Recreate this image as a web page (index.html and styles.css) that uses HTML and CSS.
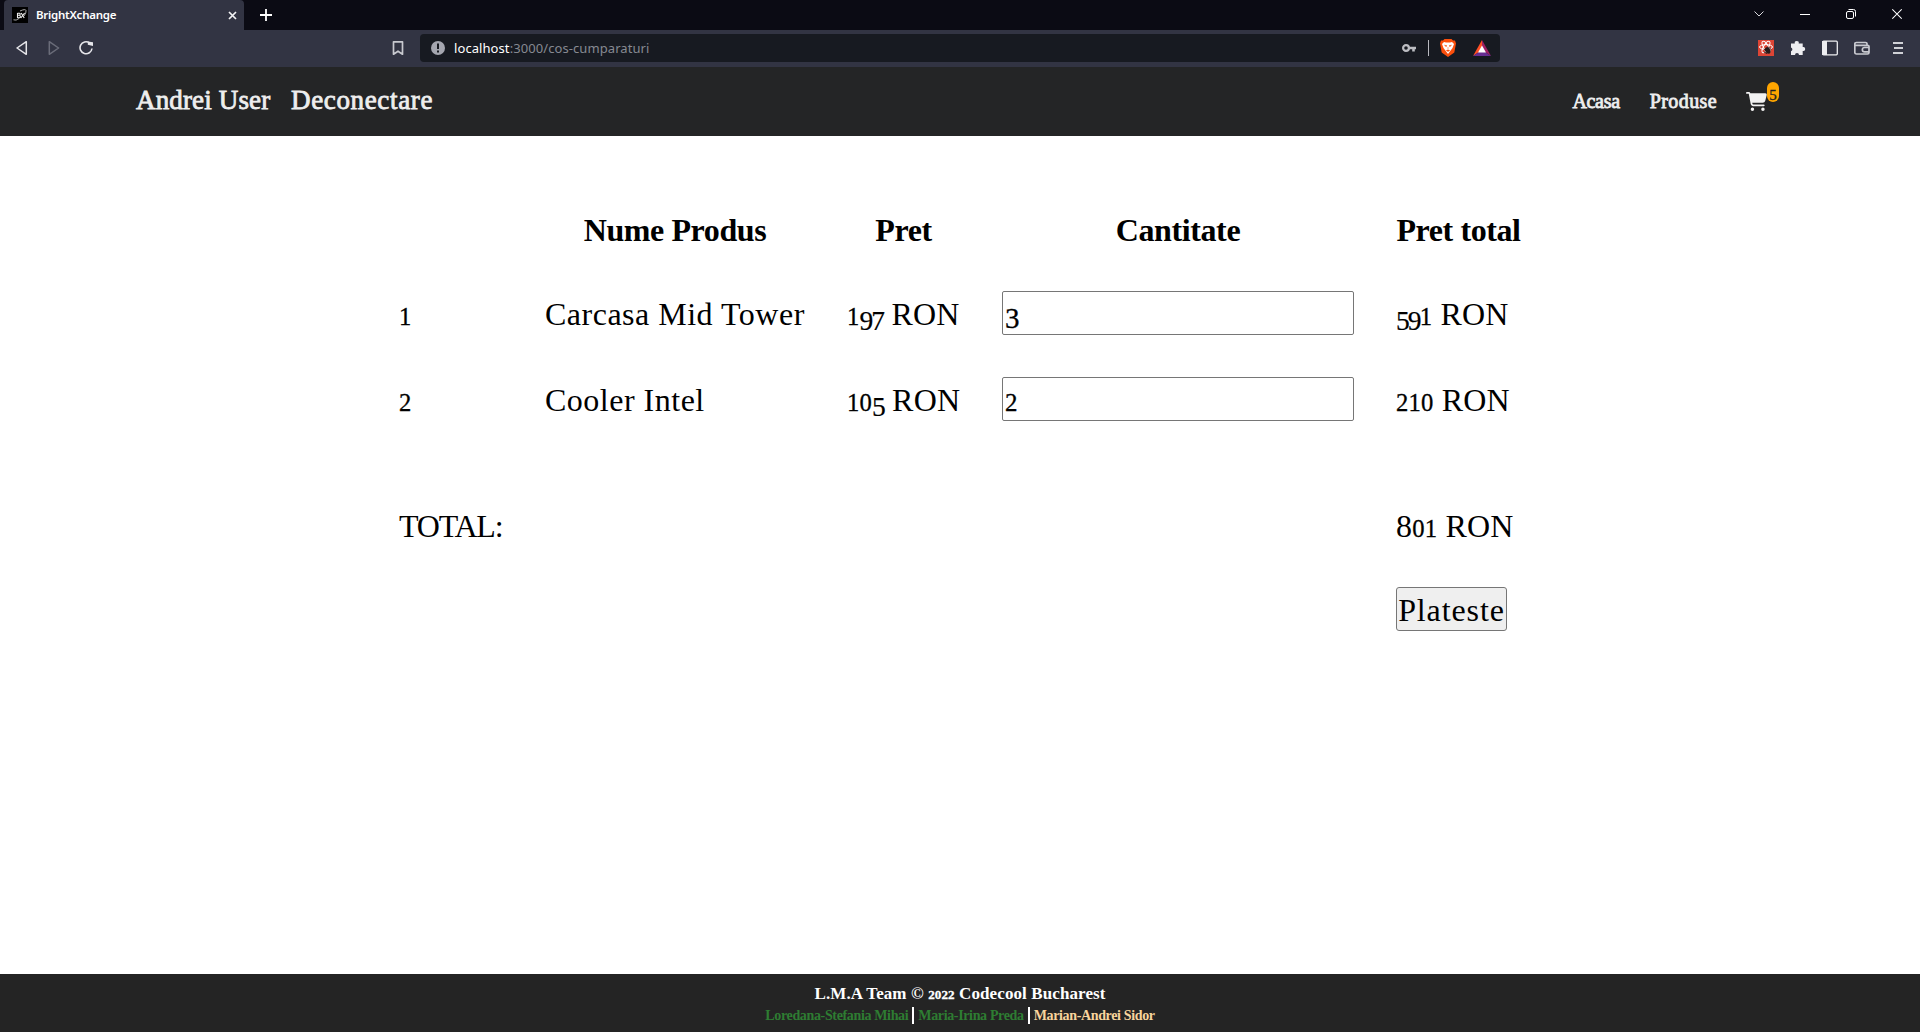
FILE: index.html
```html
<!DOCTYPE html>
<html lang="ro">
<head>
<meta charset="utf-8">
<title>BrightXchange</title>
<link rel="stylesheet" href="styles.css">
</head>
<body>
<div class="tabstrip">
  <div class="tab">
    <svg class="favicon" width="16" height="16" viewBox="0 0 16 16"><rect width="16" height="16" fill="#000"/><path d="M5.500 6v5M5.500 6.200h2q1.200.4.300 2H5.800M7.500 8.300q1.600.9.300 2.400H5.500M9.200 6l3 5M12.600 6l-3.800 5" fill="none" stroke="#eee" stroke-width="1.100"/><path d="M8 4Q13.500 1.500 14 3.500T12 9M1.500 12.800Q4 14 7 11.500" fill="none" stroke="#bbb" stroke-width=".9"/></svg>
    <span class="tab-title">BrightXchange</span>
    <svg class="tab-close" width="9" height="9" viewBox="0 0 9 9"><path d="M1 1l7 7M8 1L1 8" stroke="#f2f2f4" stroke-width="1.700"/></svg>
  </div>
  <svg class="newtab" width="12" height="12" viewBox="0 0 12 12"><path d="M6 0v12M0 6h12" stroke="#fff" stroke-width="1.800"/></svg>
  <div class="window-buttons">
    <svg width="10" height="12" viewBox="0 0 10 12"><path d="M.5 3.500L5 8l4.500-4.500" fill="none" stroke="#d8d8dc"/></svg>
    <svg width="10" height="12" viewBox="0 0 10 12"><path d="M0 6.500h10" stroke="#fff"/></svg>
    <svg width="10" height="12" viewBox="0 0 10 12"><rect x=".5" y="3.500" width="7" height="7" rx="1.500" fill="none" stroke="#fff"/><path d="M2.500 1.500h5q2 0 2 2v5" fill="none" stroke="#fff"/></svg>
    <svg width="10" height="12" viewBox="0 0 10 12"><path d="M.3 1.300l9.400 9.400M9.700 1.300L.3 10.700" stroke="#fff" stroke-width="1.100"/></svg>
  </div>
</div>
<div class="toolbar">
  <svg class="back" width="12" height="16" viewBox="0 0 12 16"><path d="M10.300 1.700v12.600L1 8z" fill="none" stroke="#e6e6ea" stroke-width="1.500" stroke-linejoin="round"/></svg>
  <svg class="forward" width="12" height="16" viewBox="0 0 12 16"><path d="M1.300 1.700v12.600L10.600 8z" fill="none" stroke="#6a6c79" stroke-width="1.500" stroke-linejoin="round"/></svg>
  <svg class="reload" width="15" height="16" viewBox="0 0 15 16"><path d="M10.500 2.800A6 6 0 1 0 13 8.500" fill="none" stroke="#e6e6ea" stroke-width="1.600"/><path d="M8.800 4.700V1.500L14 2.200V6z" fill="#e6e6ea"/></svg>
  <svg class="bookmark" width="12" height="16" viewBox="0 0 12 16"><path d="M1.500 1.800h9v12.400L6 11.200l-4.500 3z" fill="none" stroke="#c8c9cf" stroke-width="1.700" stroke-linejoin="round"/></svg>
  <div class="address">
    <svg width="14" height="14" viewBox="0 0 14 14"><circle cx="7" cy="7" r="7" fill="#a4a6af"/><path d="M7 2.500v5.500M7 9.500v2" stroke="#171a21" stroke-width="2"/></svg>
    <span class="url"><b>localhost</b>:3000/cos-cumparaturi</span>
    <svg class="key" width="14" height="10" viewBox="0 0 14 10"><circle cx="4" cy="5" r="2.900" fill="none" stroke="#bcbdc2" stroke-width="2.200"/><path d="M7 5h7M11.500 5v3.500" stroke="#bcbdc2" stroke-width="2.600"/></svg>
    <span class="divider"></span>
    <svg class="brave" width="16" height="18" viewBox="0 0 16 18"><path d="M4.500 0h7l1.500 1.500L15 1.500l1 3-1.700 9L8 18l-6.300-4.500L0 4.500l1-3 2 0z" fill="#fb4f0c"/><path d="M2 5l2-2 2 .5h4l2-.5 2 2-1.500 4-1.500 2L8 15l-3-4-1.500-2z" fill="#fff"/><path d="M4.500 6.200l2.500.6-1 .8zM11.500 6.200l-2.500.6 1 .8zM8 8v2M6.300 11.500L8 10.800l1.700.7L8 12.600z" fill="#fb4f0c" stroke="#fb4f0c" stroke-width=".5"/></svg>
    <svg class="bat" width="18" height="16" viewBox="0 0 18 16"><path d="M9 0L0 16l9-6z" fill="#ff4f24"/><path d="M9 0l9 16-9-6z" fill="#9e1f63"/><path d="M0 16l9-6 9 6z" fill="#662d91"/><path d="M9 5.500l4 7H5z" fill="#fff"/></svg>
  </div>
  <div class="extensions">
    <svg width="16" height="16" viewBox="0 0 16 16"><rect width="16" height="16" fill="#dd4535"/><g fill="none" stroke="#fff"><ellipse cx="8" cy="7" rx="6.500" ry="2.400"/><ellipse cx="8" cy="7" rx="6.500" ry="2.400" transform="rotate(60 8 7)"/><ellipse cx="8" cy="7" rx="6.500" ry="2.400" transform="rotate(120 8 7)"/></g><ellipse cx="9.500" cy="10.500" rx="2.500" ry="3.500" fill="#271a1a" transform="rotate(-30 9.500 10)"/><path d="M6 9l6 4M6 12l3 1.500M10 6.500l3 3" stroke="#271a1a"/></svg>
    <svg width="16" height="16" viewBox="0 0 16 16"><path d="M1 3.500h3.800a2 2 0 1 1 3.900 0h4V7a2.050 2.050 0 1 1 0 4v4H9a2 2 0 0 0-4 0H1v-3.800a2 2 0 0 0 0-3.800z" fill="#ededf0"/></svg>
    <svg width="16" height="16" viewBox="0 0 16 16"><rect x=".7" y="1.200" width="14.600" height="13.600" rx="1" fill="none" stroke="#ededf0" stroke-width="1.300"/><path d="M0 1h5v14H0z" fill="#ededf0"/></svg>
    <svg class="wallet" width="16" height="16" viewBox="0 0 16 16"><path d="M13 5.500V3.800Q13 2.500 11.500 2.500H2.500Q.8 2.500.8 4v8.500Q.8 14 2.500 14h11q1.500 0 1.500-1.500v-6Q15 5.300 13.700 5.300H1M15 7.500h-4.500a2 2 0 0 0 0 4.300H15" fill="none" stroke="#c9cad0" stroke-width="1.700"/></svg>
    <svg class="menu" width="10" height="16" viewBox="0 0 10 16"><path d="M0 3h10M1 8h9M0 13h10" stroke="#d0d1d6" stroke-width="1.800"/></svg>
  </div>
</div>
<header class="site-nav">
  <nav class="account"><a class="user">Andrei User</a><a class="logout">Deconectare</a></nav>
  <nav class="links">
    <a class="home">Acasa</a><a class="products">Produse</a>
    <a class="cart">
      <svg width="21" height="19" viewBox="0 0 576 512" preserveAspectRatio="none"><path fill="#f2f2f2" d="M0 24C0 10.700 10.700 0 24 0h46c22 0 41 13 50 32h411c26 0 45 25 38 50l-41 152c-9 31-37 53-69 53H171l5 29c2 11 12 19 24 19h288c13 0 24 11 24 24s-11 24-24 24H200c-35 0-65-25-71-59L77 54c-1-4-4-6-8-6H24C11 48 0 37 0 24zM128 464a48 48 0 1 1 96 0 48 48 0 0 1-96 0zm336-48a48 48 0 1 1 0 96 48 48 0 0 1 0-96z"/></svg>
      <span class="badge">5</span>
    </a>
  </nav>
</header>
<main>
  <div class="basket">
    <div class="row head"><span></span><span>Nume Produs</span><span>Pret</span><span>Cantitate</span><span>Pret total</span></div>
    <div class="row"><span><i class="x">1</i></span><span class="name">Carcasa Mid Tower</span><span><i class="x">1</i><i class="d">97</i> RON</span><input class="low" value="3"><span><i class="d">59</i><i class="x">1</i> RON</span></div>
    <div class="row second"><span><i class="x">2</i></span><span class="name">Cooler Intel</span><span><i class="x">10</i><i class="d">5</i> RON</span><input value="2"><span><i class="x">210</i> RON</span></div>
    <div class="row total"><span class="sum-label">TOTAL:</span><span></span><span></span><span></span><span>8<i class="x">01</i> RON</span></div>
    <div class="row pay"><span></span><span></span><span></span><span></span><button>Plateste</button></div>
  </div>
</main>
<footer>
  <div class="team">L.M.A Team © <i class="x">2022</i> Codecool Bucharest</div>
  <div class="authors"><span class="a1">Loredana-Stefania Mihai</span><span class="bar"></span><span class="a2">Maria-Irina Preda</span><span class="bar"></span><span class="a3">Marian-Andrei Sidor</span></div>
</footer>
</body>
</html>
```
FILE: styles.css
```css
* { box-sizing: border-box; }
body { margin: 0; height: 1032px; display: flex; flex-direction: column; overflow: hidden; background: #fff; font-family: "Liberation Serif", serif; color: #000; }
svg { display: block; flex: none; }
i { font-style: normal; line-height: 0; }
i.x { font-size: .77em; -webkit-text-stroke: .3px; }
i.d { font-size: .86em; letter-spacing: -1.9px; vertical-align: -.17em; -webkit-text-stroke: .2px; }

.tabstrip { height: 30px; flex: none; display: flex; background: #0b0b14; font-family: "Noto Sans", sans-serif; padding-left: 4px; }
.tab { width: 240px; height: 30px; padding: 0 7px 0 8px; display: flex; align-items: center; background: #323443; border-radius: 4px 4px 0 0; }
.tab-title { flex: 1; margin-left: 8px; font-size: 11.5px; font-weight: 600; letter-spacing: -.25px; line-height: 30px; color: #fff; padding-bottom: 1px; }
.newtab { margin: 9px 0 0 16px; }
.window-buttons { margin: 8px 18px 0 auto; display: flex; gap: 36px; }

.toolbar { height: 37px; flex: none; display: flex; align-items: center; background: #323443; padding: 0 17px 1px 16px; font-family: "Noto Sans", sans-serif; }
.forward { margin-left: 20px; }
.reload { margin-left: 19px; }
.bookmark { margin-left: 298px; }
.address { width: 1080px; height: 28px; margin-left: 16px; padding: 0 9px 0 11px; display: flex; align-items: center; background: #171a21; border-radius: 4px; }
.url { margin-left: 9px; flex: 1; font-size: 13px; line-height: 28px; letter-spacing: .08px; color: #868991; }
.url b { font-weight: 400; color: #fff; }
.divider { width: 1px; height: 16px; background: #b9bac0; margin: 0 11px 0 12px; }
.bat { margin-left: 17px; }
.extensions { margin-left: auto; display: flex; gap: 16px; }
.menu { margin-left: 5px; }
.wallet { margin-right: 2px; }

.site-nav { height: 69px; flex: none; display: flex; justify-content: space-between; background: #242526; color: #eee; padding: 0 141px 0 136px; }
.account { display: flex; font-size: 27px; line-height: 66px; -webkit-text-stroke: .8px #eee; }
.user { width: 155px; letter-spacing: .15px; }
.logout { letter-spacing: .65px; }
.links { display: flex; font-size: 20px; line-height: 68px; -webkit-text-stroke: .8px #eee; }
.home { letter-spacing: -.3px; }
.products { margin-left: 30px; letter-spacing: .4px; }
.cart { display: flex; margin-left: 29px; -webkit-text-stroke: 0; }
.cart svg { margin-top: 25px; }
.badge { width: 12px; height: 20px; margin-top: 15px; border-radius: 6px; background: orange; color: #222; font-size: 15px; line-height: 26px; text-align: center; -webkit-text-stroke: .3px #222; }

main { flex: 1; padding: 72px 0 0 399px; }
.row { display: grid; grid-template-columns: 146px 302px 155px 352px 125px; height: 44px; font-size: 32px; line-height: 42px; letter-spacing: .2px; }
.row > span { padding-top: 2px; white-space: nowrap; }
.row > :nth-child(5) { margin-left: 42px; margin-right: -42px; }
.row > .name { letter-spacing: .5px; }
.row.head { font-weight: 700; text-align: center; letter-spacing: -.4px; margin-bottom: 39px; }
.head > span { padding-top: 1px; }
.head > :nth-child(2), .head > :nth-child(3) { padding-right: 42px; }
.second { margin-top: 42px; }
.total { margin-top: 82px; }
.sum-label { letter-spacing: -1.2px; }
.pay { margin-top: 40px; }
input { width: 352px; height: 44px; border: 1px solid #767676; border-radius: 2px; padding: 7px 2px 0; font: 25px "Liberation Serif", serif; outline: none; -webkit-text-stroke: .3px; }
input.low { font-size: 29px; padding-top: 10px; }
button { width: 111px; height: 44px; border: 1px solid #767676; border-radius: 3px; background: #efefef; padding: 1px 0 0; font: 32px/40px "Liberation Serif", serif; letter-spacing: .9px; color: #000; }

footer { height: 58px; flex: none; display: flex; flex-direction: column; align-items: center; background: #242424; color: #fff; font-weight: 700; }
.team { margin-top: 10px; font-size: 17px; line-height: 20px; letter-spacing: .1px; }
.authors { display: flex; align-items: center; height: 20px; margin-top: 1px; font-size: 14px; line-height: 20px; letter-spacing: -.35px; color: #2e7d32; }
.authors span:not(.bar) { padding-top: 2px; }
.bar { width: 2px; height: 17px; margin: 0 4px; background: #fff; }
.a3 { color: #f8d49c; }
```
